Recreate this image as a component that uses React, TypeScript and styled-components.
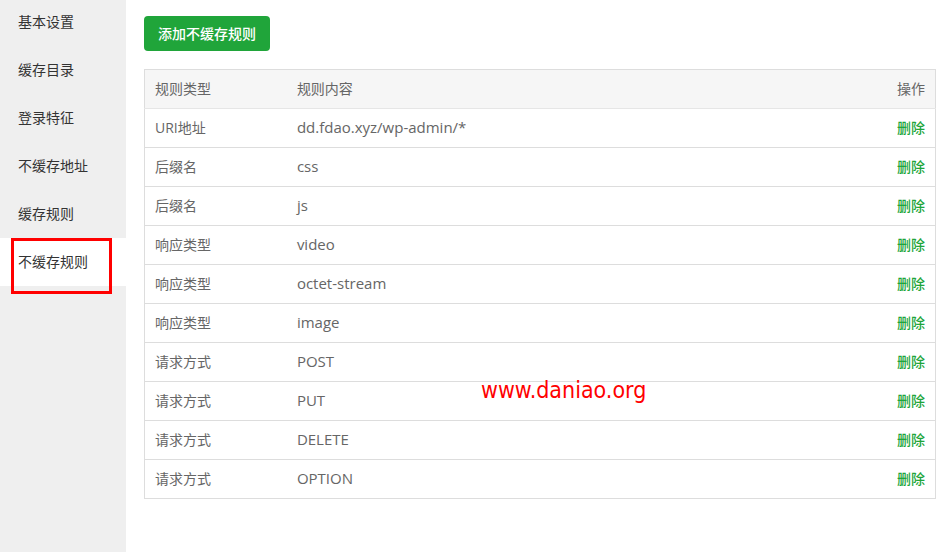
import React from 'react';
import styled, { createGlobalStyle } from 'styled-components';

const GlobalStyle = createGlobalStyle`
  * { box-sizing: border-box; }
  body {
    margin: 0;
    background: #fff;
    color: #666;
    font: 14px/20px "Open Sans", "Noto Sans CJK SC", sans-serif;
  }
`;

const Page = styled.div`
  display: flex;
  min-height: 100vh;
`;

const Sidebar = styled.nav`
  flex: none;
  width: 126px;
  background: #efefef;
`;

const Menu = styled.ul`
  list-style: none;
  margin: 0;
  padding: 0;
`;

const MenuItem = styled.li<{ $active?: boolean }>`
  position: relative;
  background: ${p => (p.$active ? '#fff' : 'transparent')};
  &:first-child a { height: 46px; padding-top: 12px; }
`;

const MenuLink = styled.a`
  display: block;
  height: 48px;
  padding: 14px 18px;
  color: #333;
  text-decoration: none;
`;

const Highlight = styled.span`
  position: absolute;
  top: 0;
  left: 11px;
  width: 101px;
  height: 56px;
  border: 3px solid #f00;
  pointer-events: none;
`;

const Main = styled.main`
  position: relative;
  flex: 1;
  min-width: 0;
  padding: 16px 12px 16px 18px;
`;

const AddButton = styled.button`
  display: block;
  height: 35px;
  margin: 0 0 18px;
  padding: 0 14px;
  border: 0;
  border-radius: 4px;
  background: #20a53a;
  color: #fff;
  font: inherit;
  font-weight: 500;
  cursor: pointer;
`;

const Table = styled.table`
  width: 100%;
  border-collapse: collapse;
  border: 1px solid #ddd;
`;

const Row = styled.tr<{ $head?: boolean }>`
  height: 39px;
  border-bottom: 1px solid ${p => (p.$head ? '#e6e6e6' : '#ddd')};
`;

const Cell = styled.td<{ $end?: boolean }>`
  padding: 0 10px;
  text-align: ${p => (p.$end ? 'right' : 'left')};
`;

const ContentCell = styled(Cell)`
  padding-bottom: 2px;
  font-size: 15px;
`;

const HeadCell = styled.th<{ $end?: boolean; $width?: string }>`
  width: ${p => p.$width ?? 'auto'};
  padding: 0 10px;
  background: #f6f6f6;
  font-weight: 400;
  text-align: ${p => (p.$end ? 'right' : 'left')};
`;

const DeleteButton = styled.button`
  padding: 0;
  border: 0;
  background: none;
  color: #20a53a;
  font: inherit;
  font-weight: 500;
  cursor: pointer;
`;

const Watermark = styled.span`
  position: absolute;
  top: 374px;
  left: 355px;
  color: #f00;
  font: 23px/32px "DejaVu Sans Condensed", "DejaVu Sans", sans-serif;
  pointer-events: none;
`;

const menu = ['基本设置', '缓存目录', '登录特征', '不缓存地址', '缓存规则', '不缓存规则'];
const activeItem = '不缓存规则';

const rules = [
  ['URI地址', 'dd.fdao.xyz/wp-admin/*'],
  ['后缀名', 'css'],
  ['后缀名', 'js'],
  ['响应类型', 'video'],
  ['响应类型', 'octet-stream'],
  ['响应类型', 'image'],
  ['请求方式', 'POST'],
  ['请求方式', 'PUT'],
  ['请求方式', 'DELETE'],
  ['请求方式', 'OPTION'],
];

export default function App() {
  return (
    <>
      <GlobalStyle />
      <Page>
        <Sidebar>
          <Menu>
            {menu.map(label => (
              <MenuItem key={label} $active={label === activeItem}>
                <MenuLink href="#">{label}</MenuLink>
                {label === activeItem && <Highlight />}
              </MenuItem>
            ))}
          </Menu>
        </Sidebar>
        <Main>
          <AddButton type="button">添加不缓存规则</AddButton>
          <Table>
            <thead>
              <Row $head>
                <HeadCell scope="col" $width="18%">规则类型</HeadCell>
                <HeadCell scope="col">规则内容</HeadCell>
                <HeadCell scope="col" $width="18%" $end>操作</HeadCell>
              </Row>
            </thead>
            <tbody>
              {rules.map(([type, content]) => (
                <Row key={content}>
                  <Cell>{type}</Cell>
                  <ContentCell>{content}</ContentCell>
                  <Cell $end><DeleteButton type="button">删除</DeleteButton></Cell>
                </Row>
              ))}
            </tbody>
          </Table>
          <Watermark>www.daniao.org</Watermark>
        </Main>
      </Page>
    </>
  );
}
